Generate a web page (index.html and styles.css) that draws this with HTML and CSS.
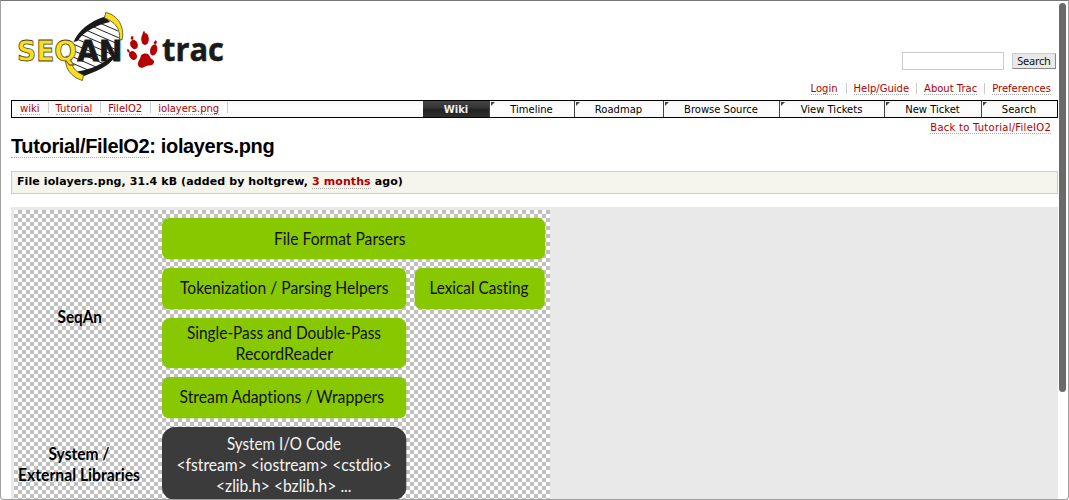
FILE: index.html
```html
<!DOCTYPE html>
<html lang="en">
<head>
<meta charset="utf-8">
<title>iolayers.png on Tutorial/FileIO2 – SeqAn</title>
<link rel="stylesheet" href="styles.css">
</head>
<body>
<div class="window">
  <header class="banner">
    <svg class="logo" width="215" height="80" viewBox="12 8 215 80" role="img" aria-label="SeqAn trac">
      <defs>
        <clipPath id="helix"><path d="M106 17C92 21 78 33 74 43C68 54 68 65 76 71L82 74C96 71 112 63 117 48C121 36 119 23 106 17Z"/></clipPath>
      </defs>
      <g clip-path="url(#helix)">
        <path class="rungs" d="M65 21L125 47M65 27.500L125 53.500M65 34L125 60M65 40.500L125 66.500M65 47L125 73M65 53.500L125 79.500M65 14.500L125 40.500M65 8L125 34M65 60L125 86"/>
      </g>
      <path class="strand" d="M105 16.500C90 21 78 31 73.500 42L77.500 41C84 31 97 25 110 22ZM77 71.500C93 69 104 63 110 57L115 57C107 68 96 71 84 76Z"/>
      <path class="ribbon" d="M105.700 12.500C118 15 125 27 122 40L119.500 39.500C120.500 28 115 22 104.500 18ZM66.500 56C63 67 71 77 82.500 80.500L83.500 75C75 72 70 65 71 57Z"/>
      <text class="seq" x="17" y="61" textLength="60" lengthAdjust="spacingAndGlyphs">SEQ</text>
      <text class="an" x="77.300" y="61" textLength="45" lengthAdjust="spacingAndGlyphs">AN</text>
      <g class="paw">
        <ellipse cx="134" cy="44.500" rx="3.700" ry="4.800" transform="rotate(-25 134 44.500)"/>
        <ellipse cx="145" cy="39" rx="3.800" ry="6"/>
        <ellipse cx="153.700" cy="50" rx="3.500" ry="5.700" transform="rotate(15 153.700 50)"/>
        <ellipse cx="133" cy="55.500" rx="3.700" ry="4.700" transform="rotate(-35 133 55.500)"/>
        <path d="M141 55.500C144 52.500 149 53 150 57C151 59.500 154.500 59 154 62.500C153 66 149 65 146 66C142 69 138.500 68 138 64.500C137.500 61.500 140 60 141 55.500Z"/>
        <path d="M131.500 36L133.500 36.500L133 40L130.500 39ZM143 31.500H145L144.500 35H142.500ZM155.500 40L157 42L155.500 45L153.500 43ZM127 49L129 49.500L130 53L127.500 52Z"/>
      </g>
      <text class="trac" x="162" y="61" textLength="62" lengthAdjust="spacingAndGlyphs">trac</text>
    </svg>
    <form class="search"><input class="field" type="text" aria-label="Search"><button class="button" type="button">Search</button></form>
  </header>
  <nav class="metanav"><a>Login</a><a>Help/Guide</a><a>About Trac</a><a>Preferences</a></nav>
  <nav class="mainnav">
    <div class="crumbs"><a>wiki</a><a>Tutorial</a><a>FileIO2</a><a>iolayers.png</a></div>
    <div class="tabs"><a class="tab active">Wiki</a><a class="tab">Timeline</a><a class="tab">Roadmap</a><a class="tab">Browse Source</a><a class="tab">View Tickets</a><a class="tab">New Ticket</a><a class="tab">Search</a></div>
  </nav>
  <nav class="context"><a>Back to Tutorial/FileIO2</a></nav>
  <h1 class="title"><a>Tutorial/FileIO2</a>: iolayers.png</h1>
  <div class="info">File iolayers.png, 31.4 kB (added by holtgrew, <a>3 months</a> ago)</div>
  <div class="preview">
    <svg class="diagram" width="536" height="300" viewBox="14 210 536 300">
      <defs>
        <pattern id="checker" x="14" y="210" width="8" height="8" patternUnits="userSpaceOnUse">
          <path d="M0 0H8V8H0Z" fill="#fff"/><path d="M4 0H8V4H4ZM0 4H4V8H0Z" fill="#bfbfbf"/>
        </pattern>
      </defs>
      <rect x="14" y="210" width="536" height="300" fill="url(#checker)"/>
      <g class="green">
        <rect x="162" y="218" width="383" height="41.300" rx="7"/>
        <rect x="162" y="268" width="244.300" height="41.300" rx="7"/>
        <rect x="414.700" y="268" width="130" height="41.300" rx="7"/>
        <rect x="162" y="318" width="244.300" height="50.300" rx="8"/>
        <rect x="162" y="377" width="244.300" height="41.300" rx="7"/>
      </g>
      <rect class="dark" x="162" y="427" width="244.300" height="73" rx="13"/>
      <g class="label">
        <text x="274" y="244.500" textLength="131.500" lengthAdjust="spacingAndGlyphs">File Format Parsers</text>
        <text x="180" y="293.500" textLength="208.500" lengthAdjust="spacingAndGlyphs">Tokenization / Parsing Helpers</text>
        <text x="429.500" y="293.500" textLength="99" lengthAdjust="spacingAndGlyphs">Lexical Casting</text>
        <text x="187" y="339" textLength="194" lengthAdjust="spacingAndGlyphs">Single-Pass and Double-Pass</text>
        <text x="235.500" y="360" textLength="97.500" lengthAdjust="spacingAndGlyphs">RecordReader</text>
        <text x="179.500" y="402.500" textLength="204.500" lengthAdjust="spacingAndGlyphs">Stream Adaptions / Wrappers</text>
      </g>
      <g class="label light">
        <text x="227" y="449.500" textLength="114" lengthAdjust="spacingAndGlyphs">System I/O Code</text>
        <text x="176.500" y="471" textLength="215" lengthAdjust="spacingAndGlyphs">&lt;fstream&gt; &lt;iostream&gt; &lt;cstdio&gt;</text>
        <text x="216" y="491.500" textLength="135.500" lengthAdjust="spacingAndGlyphs">&lt;zlib.h&gt; &lt;bzlib.h&gt; ...</text>
      </g>
      <g class="label bold">
        <text x="57.500" y="322.500" textLength="44.500" lengthAdjust="spacingAndGlyphs">SeqAn</text>
        <text x="48.500" y="460" textLength="61" lengthAdjust="spacingAndGlyphs">System /</text>
        <text x="18" y="481" textLength="122" lengthAdjust="spacingAndGlyphs">External Libraries</text>
      </g>
    </svg>
  </div>
  <div class="scrollbar"></div>
</div>
</body>
</html>
```
FILE: styles.css
```css
* { box-sizing: border-box; }
body { margin: 0; background: #fff; color: #000; font: 10px/13px "DejaVu Sans", sans-serif; }
.window { position: relative; height: 500px; overflow: hidden; padding: 0 10px; border: 1px solid #a0a0a0; border-top-color: #777; border-radius: 0 0 4px 4px; }
a { color: #b00000; border-bottom: 1px dotted #aaa; }
.banner { display: flex; justify-content: space-between; height: 81px; padding: 7px 2px 0 1px; }
.logo { display: block; flex: none; }
.rungs { fill: none; stroke: #222; stroke-width: 1; }
.strand, .an, .trac { fill: #1a1a1a; }
.ribbon { fill: #f8df20; stroke: #4b4520; stroke-width: .8; }
.seq, .an { font: bold 29px "DejaVu Sans", sans-serif; }
.seq { fill: #f8df20; stroke: #4b4520; stroke-width: .8; }
.an { stroke: #1a1a1a; stroke-width: .9; }
.trac { font: bold 33px "Open Sans", sans-serif; stroke: #1a1a1a; stroke-width: .5; }
.paw { fill: #b40000; }
.search { display: flex; gap: 8px; align-items: center; height: 18px; margin-top: 44px; }
.field { width: 102px; height: 18px; padding: 0; border: 1px solid #ccc; background: #fff; }
.button { width: 44px; height: 16px; padding: 0; border: 1px solid #ccc; border-right-color: #888; border-bottom-color: #888; background: #e9e9e9; color: #111; font: 11px/12px "Noto Sans", sans-serif; letter-spacing: -.25px; }
.metanav { display: flex; justify-content: flex-end; height: 19px; padding-top: 1px; line-height: 12px; }
.metanav a { height: 12px; margin-right: 7px; }
.metanav a + a { position: relative; margin-left: 8px; }
.metanav a:first-child { margin-right: 8px; }
.metanav a + a::before { content: ""; position: absolute; left: -8px; top: 0; height: 11px; border-left: 1px solid #ccc; }
.mainnav { display: flex; justify-content: space-between; width: 1047px; height: 18px; margin-top: -1px; border: 1px solid #000; background: linear-gradient(#f5f5f5, #fff 40%, #f7f7f7); }
.crumbs { display: flex; padding-left: 8px; line-height: 15px; }
.crumbs a { position: relative; height: 14px; margin-right: 16px; }
.crumbs a:last-child { letter-spacing: -.05px; }
.crumbs a::after { content: ""; position: absolute; right: -9px; top: 1px; height: 11px; border-left: 1px solid #ccc; }
.tabs { display: grid; grid-template-columns: 67px 85px 89px 116px 105px 97px 75px; line-height: 17px; text-align: center; }
.tab { position: relative; height: 16px; border: 0; border-right: 1px solid #444; color: #000; }
.tab:nth-child(n+2) { padding-right: 1px; }
.tab:last-child { border-right: 0; }
.tab::before { content: ""; position: absolute; left: 1px; top: 1px; border-top: 4px solid #444; border-right: 4px solid transparent; }
.active { background: linear-gradient(#444, #333 45%, #222 50%, #2d2d2d); color: #eee; font-weight: bold; }
.active::before { display: none; }
.context { display: flex; justify-content: flex-end; height: 17px; padding-top: 3px; }
.context a { height: 13px; margin-right: 7px; letter-spacing: .25px; }
.title { height: 24px; margin: 0; font: bold 20px/22px "Liberation Sans", Arial, sans-serif; letter-spacing: -.36px; white-space: nowrap; }
.title a { display: inline-block; height: 23px; color: #000; }
.info { width: 1047px; height: 23px; margin-top: 12px; padding: 3px 5px; border: 1px solid #ccc; background: #f5f5eb; font-size: 11px; line-height: 13px; font-weight: bold; letter-spacing: .1px; white-space: nowrap; }
.preview { width: 1047px; height: 300px; margin-top: 13px; padding: 3px; background: #e9e9e9; }
.diagram { display: block; }
.green { fill: #88c800; }
.dark { fill: #3b3b3b; }
.label { font: 16.5px Lato, sans-serif; font-variant-ligatures: none; fill: #111; }
.label.light { fill: #f5f5f5; }
.label.bold { font-weight: bold; fill: #000; }
.scrollbar { position: absolute; right: 2px; top: 2px; width: 7px; height: 389px; border-radius: 4px; background: #6a6a6a; }
```
